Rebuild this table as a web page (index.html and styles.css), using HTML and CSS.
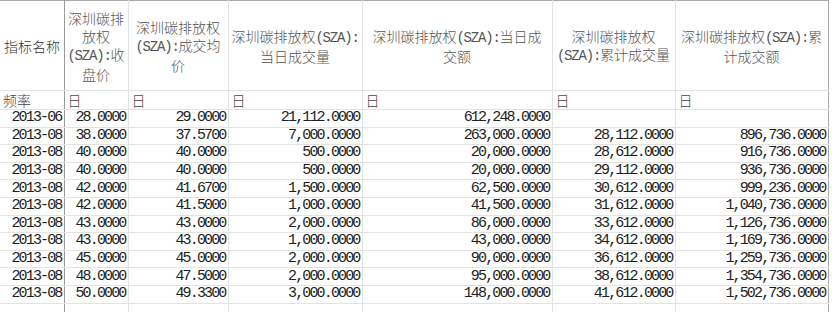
FILE: index.html
```html
<!DOCTYPE html>
<html lang="zh">
<head>
<meta charset="utf-8">
<title>深圳碳排放权</title>
<link rel="stylesheet" href="styles.css">
</head>
<body>
<table class="sheet">
  <colgroup>
    <col class="c1"><col class="c2"><col class="c3"><col class="c4"><col class="c5"><col class="c6"><col class="c7">
  </colgroup>
  <thead>
    <tr class="head">
      <th class="name">指标名称</th>
      <th>深圳碳排<br>放权<br><span class="lat">(SZA):</span>收<br>盘价</th>
      <th>深圳碳排放权<br><span class="lat">(SZA):</span>成交均<br>价</th>
      <th>深圳碳排放权<span class="lat">(SZA):</span><br>当日成交量</th>
      <th>深圳碳排放权<span class="lat">(SZA):</span>当日成<br>交额</th>
      <th>深圳碳排放权<br><span class="lat">(SZA):</span>累计成交量</th>
      <th>深圳碳排放权<span class="lat">(SZA):</span>累<br>计成交额</th>
    </tr>
    <tr class="freq">
      <td class="name">频率</td><td>日</td><td>日</td><td>日</td><td>日</td><td>日</td><td>日</td>
    </tr>
  </thead>
  <tbody>
    <tr><td class="name">2013-06</td><td>28.0000</td><td>29.0000</td><td>21,112.0000</td><td>612,248.0000</td><td></td><td></td></tr>
    <tr><td class="name">2013-08</td><td>38.0000</td><td>37.5700</td><td>7,000.0000</td><td>263,000.0000</td><td>28,112.0000</td><td>896,736.0000</td></tr>
    <tr><td class="name">2013-08</td><td>40.0000</td><td>40.0000</td><td>500.0000</td><td>20,000.0000</td><td>28,612.0000</td><td>916,736.0000</td></tr>
    <tr><td class="name">2013-08</td><td>40.0000</td><td>40.0000</td><td>500.0000</td><td>20,000.0000</td><td>29,112.0000</td><td>936,736.0000</td></tr>
    <tr><td class="name">2013-08</td><td>42.0000</td><td>41.6700</td><td>1,500.0000</td><td>62,500.0000</td><td>30,612.0000</td><td>999,236.0000</td></tr>
    <tr><td class="name">2013-08</td><td>42.0000</td><td>41.5000</td><td>1,000.0000</td><td>41,500.0000</td><td>31,612.0000</td><td>1,040,736.0000</td></tr>
    <tr><td class="name">2013-08</td><td>43.0000</td><td>43.0000</td><td>2,000.0000</td><td>86,000.0000</td><td>33,612.0000</td><td>1,126,736.0000</td></tr>
    <tr><td class="name">2013-08</td><td>43.0000</td><td>43.0000</td><td>1,000.0000</td><td>43,000.0000</td><td>34,612.0000</td><td>1,169,736.0000</td></tr>
    <tr><td class="name">2013-08</td><td>45.0000</td><td>45.0000</td><td>2,000.0000</td><td>90,000.0000</td><td>36,612.0000</td><td>1,259,736.0000</td></tr>
    <tr><td class="name">2013-08</td><td>48.0000</td><td>47.5000</td><td>2,000.0000</td><td>95,000.0000</td><td>38,612.0000</td><td>1,354,736.0000</td></tr>
    <tr><td class="name">2013-08</td><td>50.0000</td><td>49.3300</td><td>3,000.0000</td><td>148,000.0000</td><td>41,612.0000</td><td>1,502,736.0000</td></tr>
    <tr class="blank"><td class="name"></td><td></td><td></td><td></td><td></td><td></td><td></td></tr>
  </tbody>
</table>
</body>
</html>
```

FILE: styles.css
```css
html, body {
  margin: 0;
  padding: 0;
  background: #ffffff;
  overflow: hidden;
}

.sheet {
  border-collapse: collapse;
  table-layout: fixed;
  width: 828px;
  font-family: "Liberation Mono", "Noto Sans CJK SC", monospace;
  font-size: 14px;
  color: #1e1e1e;
}

.c1 { width: 64px; }
.c2 { width: 64px; }
.c3 { width: 100px; }
.c4 { width: 134px; }
.c5 { width: 190px; }
.c6 { width: 123px; }
.c7 { width: 153px; }

.sheet th,
.sheet td {
  border: 1px solid #e3e3e3;
  padding: 0 2px 0 2px;
  overflow: hidden;
  white-space: nowrap;
}

.sheet tr > :first-child {
  border-right: 1px solid #9a9a9a;
  border-left: none;
}

.sheet tr > :last-child {
  border-right: 1px solid #a8a8a8;
}

.head th {
  height: 89px;
  border-top: 1px solid #a8a8a8;
  font-weight: 300;
  text-align: center;
  vertical-align: middle;
  line-height: 18px;
  color: #555;
  font-family: "Noto Sans CJK SC", sans-serif;
}

.head th.name {
  text-align: left;
  padding-left: 4px;
  color: #333;
}

.lat {
  font-family: "Liberation Mono", monospace;
  font-weight: normal;
  letter-spacing: -1.2px;
}

.freq td {
  height: 18px;
  line-height: 17px;
  text-align: left;
  padding-left: 3px;
  font-family: "Noto Sans CJK SC", sans-serif;
  font-weight: 300;
  color: #444;
}

tbody td {
  height: 16.6px;
  line-height: 16px;
  text-align: right;
  font-size: 15px;
  letter-spacing: -1.85px;
  padding-right: 3px;
}

.blank td {
  height: 16.6px;
}
```
